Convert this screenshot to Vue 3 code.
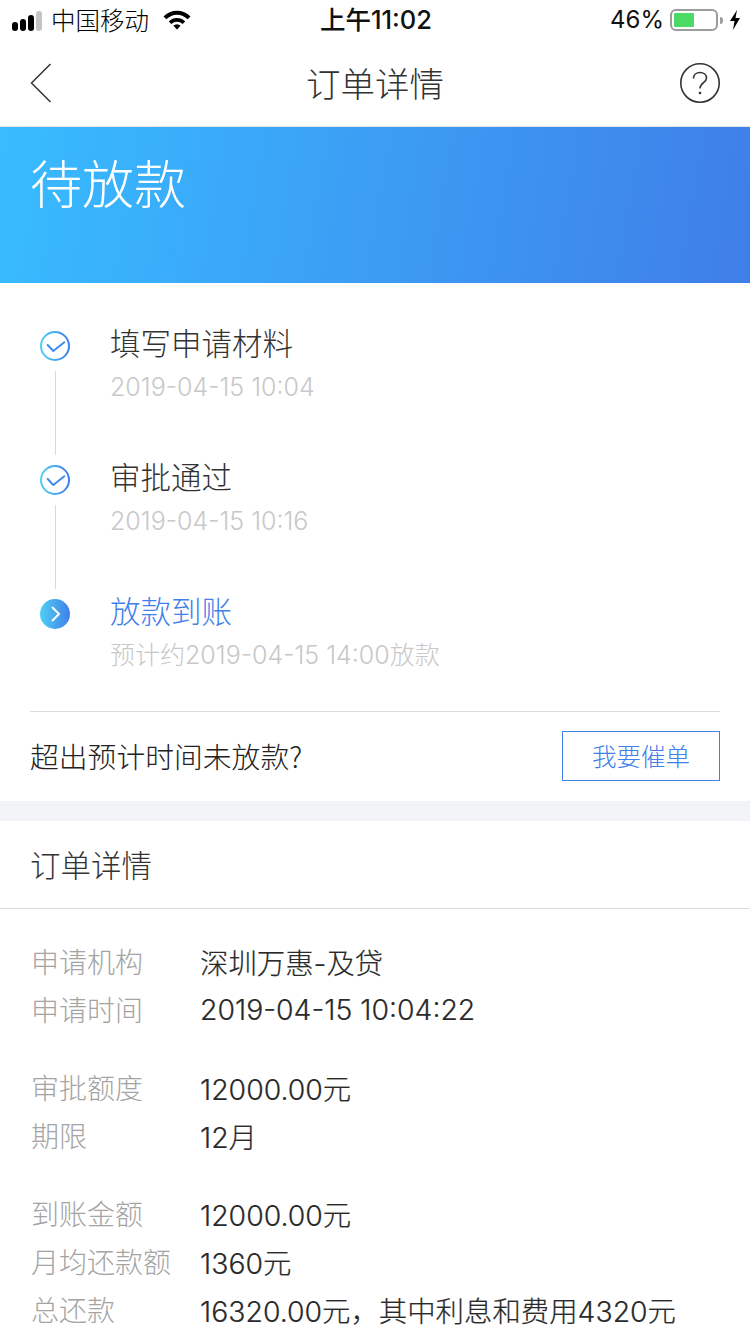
<script setup>
const steps = [
  { title: '填写申请材料', sub: '2019-04-15 10:04', done: true },
  { title: '审批通过', sub: '2019-04-15 10:16', done: true },
  { title: '放款到账', sub: '预计约2019-04-15 14:00放款', done: false },
]
const groups = [
  [['申请机构', '深圳万惠-及贷'], ['申请时间', '2019-04-15 10:04:22']],
  [['审批额度', '12000.00元'], ['期限', '12月']],
  [['到账金额', '12000.00元'], ['月均还款额', '1360元'], ['总还款', '16320.00元，其中利息和费用4320元']],
]
</script>

<template>
  <div class="page">
    <svg width="0" height="0" class="defs">
      <defs>
        <linearGradient id="grad" x1="0" y1="0" x2="1" y2="0">
          <stop offset="0" stop-color="#4fd0f2" />
          <stop offset="1" stop-color="#3f80ea" />
        </linearGradient>
      </defs>
    </svg>

    <div class="status">
      <div class="status-left">
        <div class="signal">
          <i class="b1"></i><i class="b2"></i><i class="b3"></i><i class="b4"></i>
        </div>
        <span class="carrier">中国移动</span>
        <svg class="wifi" width="28" height="20" viewBox="0 0 28 20">
          <path d="M0.500 6.500 A19 19 0 0 1 27.500 6.500 L24.600 9.300 A14.600 14.600 0 0 0 3.400 9.300Z" fill="#000" />
          <path d="M5.800 11.400 A11.600 11.600 0 0 1 22.200 11.400 L19.600 14 A8 8 0 0 0 8.400 14Z" fill="#000" />
          <path d="M10.400 15.800 A5 5 0 0 1 17.600 15.800 L14 19.400Z" fill="#000" />
        </svg>
      </div>
      <div class="time">上午11:02</div>
      <div class="status-right">
        <span class="pct">46%</span>
        <div class="battery"><div class="fill"></div></div>
        <div class="nub"></div>
        <svg class="bolt" width="12" height="20" viewBox="0 0 12 20">
          <path d="M8 0 L1 11 H5.500 L4 20 L11 8 H6.500Z" fill="#000" />
        </svg>
      </div>
    </div>

    <div class="nav">
      <svg class="back" width="22" height="40" viewBox="0 0 22 40">
        <path d="M20.500 1 L1.500 20 L20.500 39" fill="none" stroke="#333" stroke-width="1.500" />
      </svg>
      <div class="nav-title">订单详情</div>
      <svg class="help" width="40" height="40" viewBox="0 0 40 40">
        <circle cx="20" cy="20" r="19.200" fill="none" stroke="#333" stroke-width="1.600" />
        <path d="M13.500 15.500 C13.500 11.500 16.500 9.500 20 9.500 C23.800 9.500 26.500 11.800 26.500 15 C26.500 19.500 20 20 20 25.500" fill="none" stroke="#333" stroke-width="1.600" />
        <circle cx="20" cy="30" r="1.300" fill="#333" />
      </svg>
    </div>

    <div class="hero">待放款</div>

    <div class="steps">
      <div v-for="(s, i) in steps" :key="s.title" class="step">
        <div class="rail">
          <svg v-if="s.done" width="30" height="30" viewBox="0 0 30 30">
            <circle cx="15" cy="15" r="14" fill="none" stroke="url(#grad)" stroke-width="2" />
            <path d="M7.700 14 L13.300 20 L24.300 11.300" fill="none" stroke="#3f8cec" stroke-width="2" stroke-linecap="round" stroke-linejoin="round" />
          </svg>
          <svg v-else width="30" height="30" viewBox="0 0 30 30">
            <circle cx="15" cy="15" r="15" fill="url(#grad)" />
            <path d="M12 8 L19 15 L12 22" fill="none" stroke="#fff" stroke-width="2" />
          </svg>
          <div v-if="i < steps.length - 1" class="line"></div>
        </div>
        <div class="step-text">
          <div class="step-title" :class="{ active: !s.done }">{{ s.title }}</div>
          <div class="step-sub">{{ s.sub }}</div>
        </div>
      </div>
    </div>

    <div class="urge">
      <span class="urge-text">超出预计时间未放款?</span>
      <div class="urge-btn">我要催单</div>
    </div>

    <div class="gap"></div>

    <div class="section-title">订单详情</div>

    <div class="details">
      <div v-for="(g, gi) in groups" :key="gi" class="group">
        <div v-for="r in g" :key="r[0]" class="row">
          <span class="label">{{ r[0] }}</span>
          <span class="value">{{ r[1] }}</span>
        </div>
      </div>
    </div>
  </div>
</template>

<style>
html, body { margin: 0; background: #fff; }
</style>

<style scoped>
.page {
  width: 750px;
  height: 1334px;
  overflow: hidden;
  background: #fff;
  font-family: "Noto Sans CJK SC", "Noto Sans", sans-serif;
  color: #333;
}
.defs { position: absolute; }
.status {
  height: 40px;
  display: grid;
  grid-template-columns: 1fr auto 1fr;
  align-items: center;
  color: #111;
  font-size: 24px;
}
.status-left { display: flex; align-items: center; padding-left: 12px; }
.signal { display: flex; align-items: flex-end; gap: 2px; height: 20px; margin-top: 1px; }
.signal i { width: 6px; background: #000; border-radius: 3px; }
.b1 { height: 9px; }
.b2 { height: 12px; }
.b3 { height: 16px; }
.signal .b4 { height: 20px; background: #c4c4c4; }
.carrier { margin-left: 9px; line-height: 40px; font-weight: 300; color: #000; font-size: 24.500px; }
.wifi { margin-left: 14px; }
.time { font-size: 25.500px; line-height: 40px; font-weight: 500; margin-left: 2px; font-family: "Inter", "Noto Sans CJK SC", sans-serif; }
.status-right { display: flex; align-items: center; justify-content: flex-end; padding-right: 9px; }
.pct { font-family: "Inter", sans-serif; font-size: 24px; line-height: 40px; }
.battery {
  width: 48px;
  height: 22px;
  box-sizing: border-box;
  border: 2px solid #9c9c9c;
  border-radius: 6px;
  margin-left: 6px;
  padding: 2px;
}
.fill { width: 20px; height: 14px; background: #4cd964; border-radius: 1px; }
.nub { width: 3px; height: 7px; background: #9c9c9c; border-radius: 0 3px 3px 0; margin-left: 2px; }
.bolt { margin-left: 6px; }
.nav {
  height: 87px;
  box-sizing: border-box;
  border-bottom: 1px solid #e4e4e4;
  display: grid;
  grid-template-columns: 1fr auto 1fr;
  align-items: center;
  padding: 0 30px;
}
.back { margin-bottom: 1px; }
.nav-title { font-size: 34.500px; font-weight: 300; color: #333; margin-top: -2px; }
.help { justify-self: end; }
.hero {
  height: 156px;
  box-sizing: border-box;
  background: linear-gradient(100deg, #38bcff 0%, #3f7ee8 100%);
  color: #fff;
  font-size: 52px;
  font-weight: 300;
  line-height: 110px;
  padding-left: 30px;
}
.steps { padding-top: 48px; height: 428px; box-sizing: border-box; }
.step { display: flex; height: 134px; }
.rail {
  width: 80px;
  margin-left: 40px;
  display: flex;
  flex-direction: column;
  align-items: flex-start;
}
.rail svg { display: block; }
.line { width: 1px; height: 84px; background: #d8d8d8; margin: 10px 0 0 15px; }
.step-text { margin-left: -10px; margin-top: -4px; }
.step-title { font-size: 30.500px; line-height: 32px; margin-top: -1px; font-weight: 300; }
.step-title.active { color: #3f80ea; }
.step-sub { font-size: 25px; line-height: 32px; margin-top: 13px; color: #c8c8c8; font-weight: 300; font-family: "Inter", "Noto Sans CJK SC", sans-serif; }
.urge {
  margin: 0 30px;
  height: 90px;
  box-sizing: border-box;
  border-top: 1px solid #dcdcdc;
  padding-bottom: 2px;
  display: flex;
  align-items: center;
  justify-content: space-between;
}
.urge-text { font-size: 28.800px; font-weight: 300; color: #222; }
.urge-btn {
  width: 158px;
  height: 50px;
  box-sizing: border-box;
  border: 1px solid #3f80ea;
  color: #3f80ea;
  font-size: 24.500px;
  font-weight: 300;
  text-align: center;
  line-height: 48px;
}
.gap { height: 20px; background: #f2f3f7; }
.section-title {
  height: 88px;
  box-sizing: border-box;
  border-bottom: 1px solid #dcdcdc;
  padding-left: 30px;
  font-size: 30.500px;
  line-height: 86px;
  font-weight: 300;
}
.details { padding: 28px 0 0 31px; }
.group + .group { margin-top: 30px; }
.row { display: flex; height: 48px; align-items: center; font-size: 28px; }
.label { width: 169px; color: #a4a4a4; font-weight: 300; flex: none; }
.value { color: #2a2a2a; font-family: "Inter", "Noto Sans CJK SC", sans-serif; font-weight: 300; font-size: 28.400px; -webkit-text-stroke: 0.2px #2a2a2a; }
</style>
